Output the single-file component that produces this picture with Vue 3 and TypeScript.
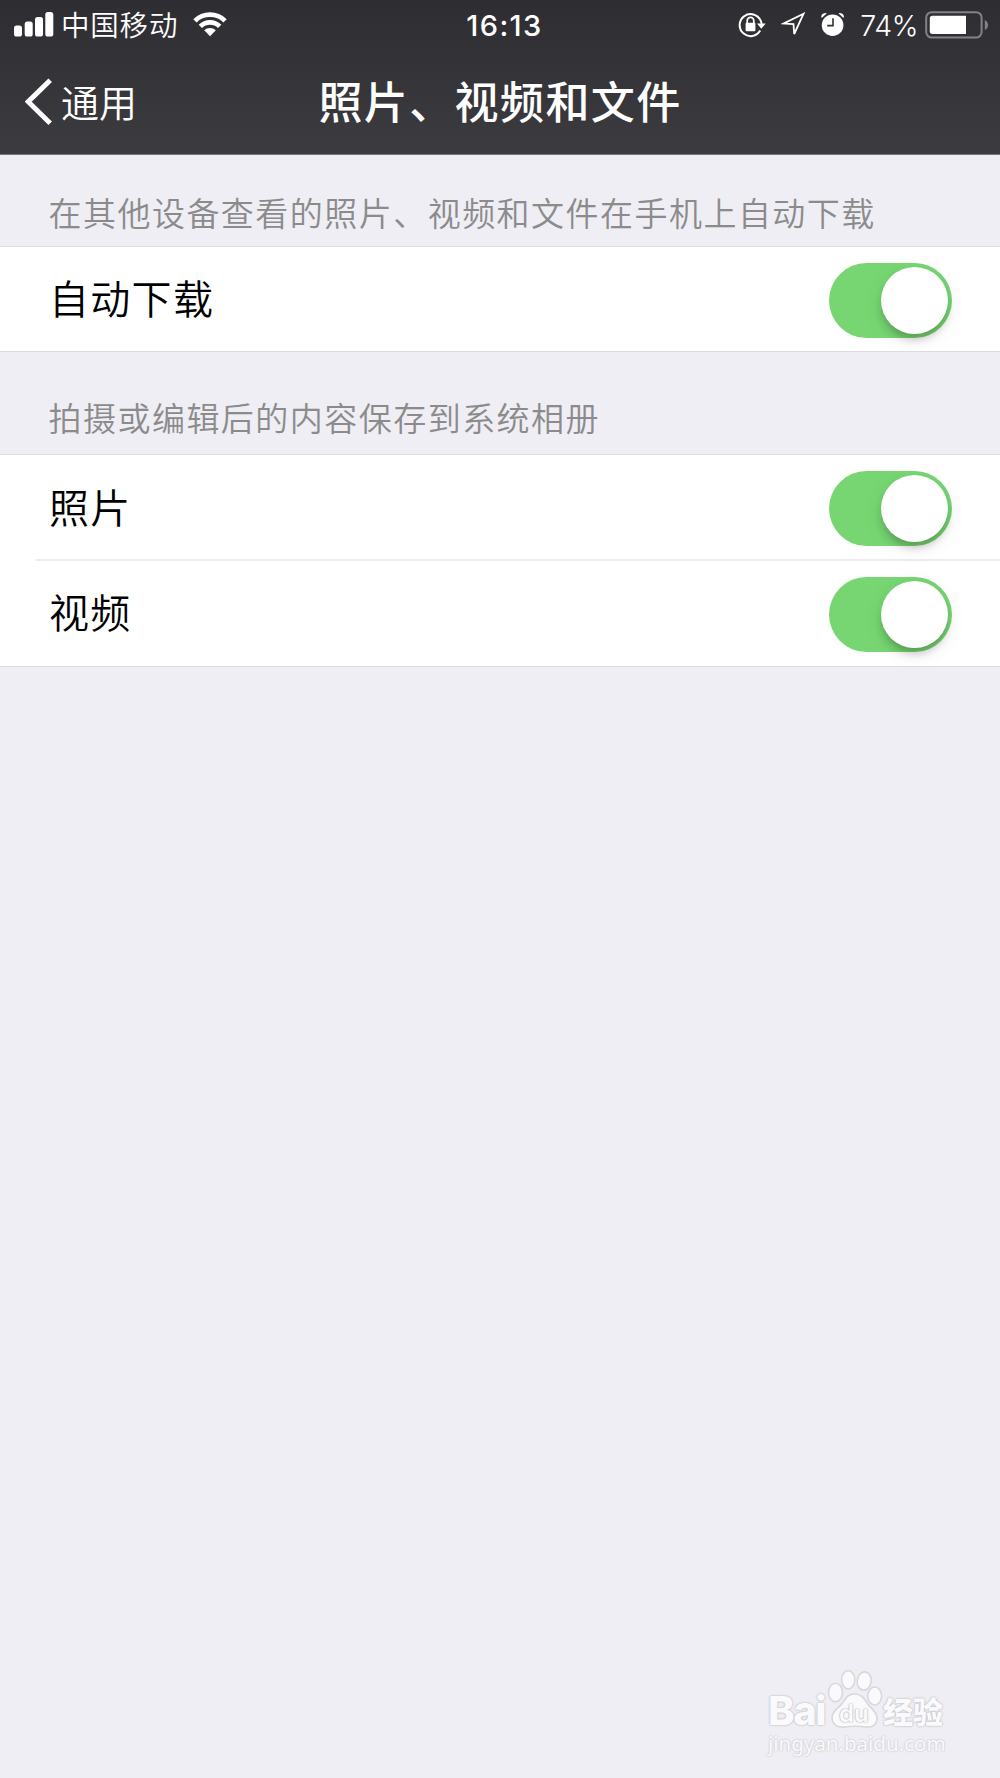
<script setup lang="ts">
import { reactive } from 'vue'

interface Item {
  label: string
  on: boolean
}
interface Section {
  title: string
  items: Item[]
}

const sections = reactive<Section[]>([
  {
    title: '在其他设备查看的照片、视频和文件在手机上自动下载',
    items: [{ label: '自动下载', on: true }],
  },
  {
    title: '拍摄或编辑后的内容保存到系统相册',
    items: [
      { label: '照片', on: true },
      { label: '视频', on: true },
    ],
  },
])
</script>

<template>
  <div class="screen">
    <header class="top">
      <div class="status">
        <div class="status-left">
          <svg class="signal" width="40" height="25" viewBox="0 0 40 25">
            <rect x="0" y="13.5" width="8" height="11" rx="2.6" />
            <rect x="10.7" y="9.5" width="8" height="15" rx="2.6" />
            <rect x="21" y="5" width="8" height="19.5" rx="2.6" />
            <rect x="31.3" y="0" width="8" height="24.5" rx="2.6" />
          </svg>
          <span class="carrier">中国移动</span>
          <svg class="wifi" width="34" height="25" viewBox="0 0 34 25">
            <path d="M0.3 7.2 A23.5 23.5 0 0 1 33.7 7.2 L30.4 10.5 A18.8 18.8 0 0 0 3.6 10.5Z" />
            <path d="M5.7 12.7 A16 16 0 0 1 28.3 12.7 L25 16 A11.4 11.4 0 0 0 9 16Z" />
            <path d="M11.2 18.3 A8.4 8.4 0 0 1 22.8 18.3 L17 24.3Z" />
          </svg>
        </div>
        <span class="time">16:13</span>
        <div class="status-right">
          <svg class="lock" width="28" height="26" viewBox="0 0 28 26">
            <path d="M22.2 18.6 A11 11 0 1 1 22.6 8.4 Q23.5 10.2 23.6 12.4" fill="none" stroke="#fff" stroke-width="2" />
            <path d="M19 11.6 H27.7 L23.3 16.8Z" />
            <rect x="7.6" y="10.8" width="9.8" height="8.4" rx="1" />
            <path d="M9.2 11.5 V8.7 a3.3 3.3 0 0 1 6.6 0 V11.5" fill="none" stroke="#fff" stroke-width="1.7" />
          </svg>
          <svg class="arrow" width="25" height="25" viewBox="0 0 25 25">
            <path d="M22.5 1.8 L2.4 11.6 L12.5 12.2 L13.2 22Z" fill="none" stroke="#fff" stroke-width="1.8" stroke-linejoin="miter" />
          </svg>
          <svg class="alarm" width="24" height="25" viewBox="0 0 24 25">
            <circle cx="11.6" cy="13.2" r="10.8" />
            <path d="M0.4 5.6 Q-0.4 1.1 5.2 1 L5.6 1.6 L1 5.8Z M22.8 5.6 Q23.6 1.1 18 1 L17.6 1.6 L22.2 5.8Z" />
            <path d="M12 6.2 V13.6 H6.2" fill="none" stroke="#323136" stroke-width="1.6" />
          </svg>
          <span class="percent">74%</span>
          <svg class="battery" width="64" height="28" viewBox="0 0 64 28">
            <rect x="1.2" y="1.2" width="55.4" height="25.4" rx="5.5" fill="none" stroke="#838286" stroke-width="2" />
            <path d="M7.5 4.8 H41 V23 H7.5 Q4.8 23 4.8 20.3 V7.5 Q4.8 4.8 7.5 4.8Z" />
            <path d="M59.8 9 Q63 10.5 63 14 T59.8 19Z" fill="#838286" />
          </svg>
        </div>
      </div>
      <nav class="nav">
        <a class="back">
          <svg width="28" height="48" viewBox="0 0 28 48">
            <path d="M25.2 2.2 L3.2 23.7 L25.2 45.2" fill="none" stroke="#fff" stroke-width="5" />
          </svg>
          <span>通用</span>
        </a>
        <h1>照片、视频和文件</h1>
      </nav>
    </header>

    <section v-for="section in sections" :key="section.title" class="section">
      <h2>{{ section.title }}</h2>
      <div class="group">
        <div v-for="item in section.items" :key="item.label" class="row">
          <span>{{ item.label }}</span>
          <button class="switch" :class="{ on: item.on }" :aria-label="item.label" @click="item.on = !item.on">
            <i class="knob"></i>
          </button>
        </div>
      </div>
    </section>

    <div class="mark">
      <div class="mark-main">
        <b class="bai">Bai</b>
        <div class="paw">
          <svg width="56" height="60" viewBox="0 0 56 60">
            <g fill="#fafafc" stroke="#d8d8dc" stroke-width="1.6">
              <ellipse cx="8.5" cy="23.5" rx="7" ry="9.2" />
              <ellipse cx="21.2" cy="10.8" rx="6.6" ry="9.2" />
              <ellipse cx="37.2" cy="12" rx="7" ry="9.2" transform="rotate(8 37.2 12)" />
              <ellipse cx="47.7" cy="27" rx="7" ry="9" />
              <path d="M27.5 25 C34 25 37 29 40 34 C43 39 50 42 50 49 C50 56 45 58.5 39 58 C31 57 25 57 18 58 C10 59 5 55 5 48.5 C5 42 12 39 15.5 34 C19 29 21 25 27.5 25Z" />
            </g>
          </svg>
          <span class="du">du</span>
        </div>
        <b class="jy">经验</b>
      </div>
      <div class="site">jingyan.baidu.com</div>
    </div>
  </div>
</template>

<style>
body {
  margin: 0;
  background: #efeef4;
}
</style>

<style scoped>
.screen {
  position: relative;
  width: 1000px;
  height: 1778px;
  overflow: hidden;
  background: #efeef4;
  font-family: Inter, 'Noto Sans CJK SC', sans-serif;
  color: #000;
}
.top {
  box-sizing: border-box;
  height: 155px;
  background: linear-gradient(#2e2d32, #3c3b40);
  border-bottom: 1px solid #78777c;
  color: #fff;
}
.status {
  display: grid;
  grid-template-columns: 1fr auto 1fr;
  align-items: center;
  height: 49px;
  padding: 0 11px 0 14px;
}
.status svg {
  fill: #fff;
  flex: none;
}
.status-left,
.status-right {
  display: flex;
  align-items: center;
}
.status-right {
  justify-content: flex-end;
}
.carrier {
  margin: 0 0 2px 7px;
  font-family: 'Noto Sans CJK SC', sans-serif;
  font-weight: 350;
  font-size: 28.5px;
  line-height: 38px;
  letter-spacing: 0.8px;
}
.wifi {
  margin-left: 15px;
}
.time {
  padding: 1px 0 0 6px;
  font-size: 29px;
  font-weight: 500;
  letter-spacing: 1.4px;
}
.arrow {
  margin-left: 15px;
}
.alarm {
  margin-left: 15px;
}
.percent {
  margin: 1px 0 0 15px;
  font-size: 28.5px;
  font-weight: 350;
  letter-spacing: -0.4px;
}
.battery {
  margin-left: 7px;
}
.nav {
  display: grid;
  grid-template-columns: 1fr auto 1fr;
  align-items: center;
  height: 105px;
  font-family: 'Noto Sans CJK SC', sans-serif;
}
.back {
  display: flex;
  align-items: center;
  padding-left: 25px;
  font-weight: 350;
  font-size: 38px;
  line-height: 54px;
}
.back span {
  margin: 0 0 2px 8px;
}
h1 {
  margin: 0 0 3px;
  font-size: 44px;
  font-weight: 500;
  line-height: 60px;
  letter-spacing: 1.4px;
}
h2 {
  box-sizing: border-box;
  height: 101px;
  margin: 0;
  padding: 40px 0 0 48.5px;
  font-family: 'Noto Sans CJK SC', sans-serif;
  font-weight: 350;
  font-size: 33px;
  line-height: 48px;
  letter-spacing: 1.47px;
  color: #8b8b8c;
}
.section:first-of-type h2 {
  height: 91px;
  padding-top: 33px;
}
.group {
  background: #fff;
  border-top: 1px solid #dcdcde;
  border-bottom: 1px solid #dcdcde;
}
.row {
  position: relative;
  display: flex;
  justify-content: space-between;
  align-items: center;
  height: 105px;
  padding: 0 48px 0 49px;
  font-family: 'Noto Sans CJK SC', sans-serif;
  font-weight: 350;
  font-size: 40px;
  line-height: 60px;
  letter-spacing: 1.3px;
}
.row span {
  margin-bottom: 4px;
}
.row + .row::before {
  content: '';
  position: absolute;
  top: -1px;
  left: 36px;
  right: 0;
  height: 2px;
  background: #ececee;
}
.section:first-of-type .row {
  height: 104px;
}
.section:first-of-type .group {
  margin-bottom: 1px;
}
.row + .row {
  height: 106px;
}
.switch {
  display: flex;
  box-sizing: border-box;
  width: 123.5px;
  height: 75px;
  margin-top: 2px;
  padding: 4px;
  border: 0;
  border-radius: 38px;
  background: #e5e5e7;
}
.switch.on {
  justify-content: flex-end;
  background: #77d672;
}
.knob {
  width: 67px;
  height: 67px;
  border-radius: 50%;
  background: #fff;
  box-shadow: 0 7px 8px -2px rgba(0, 0, 0, 0.22), 0 5px 20px rgba(0, 0, 0, 0.09);
}
.mark {
  position: absolute;
  left: 768px;
  top: 1670px;
  color: #fafafc;
}
.mark-main {
  display: flex;
  align-items: flex-end;
  height: 59px;
  text-shadow: 0 0 2px #b8b8be, 0 0 2px #c8c8cc;
}
.bai {
  width: 59px;
  font: 800 40px/37px Inter, sans-serif;
  letter-spacing: -1.4px;
}
.paw {
  position: relative;
  width: 56px;
  height: 60px;
}
.du {
  position: absolute;
  left: 12px;
  top: 33px;
  font: 600 24px/24px Inter, sans-serif;
  text-shadow: 0 0 2px #a8a8ae, 0 0 1px #b8b8bc;
}
.jy {
  margin-bottom: 1px;
  font: 900 30px/36px 'Noto Sans CJK SC', sans-serif;
}
.site {
  margin-top: 1px;
  font: 400 20.5px/26px 'Noto Sans', sans-serif;
  text-shadow: 0 0 2px #c4c4ca, 0 0 2px #d0d0d4;
}
</style>
